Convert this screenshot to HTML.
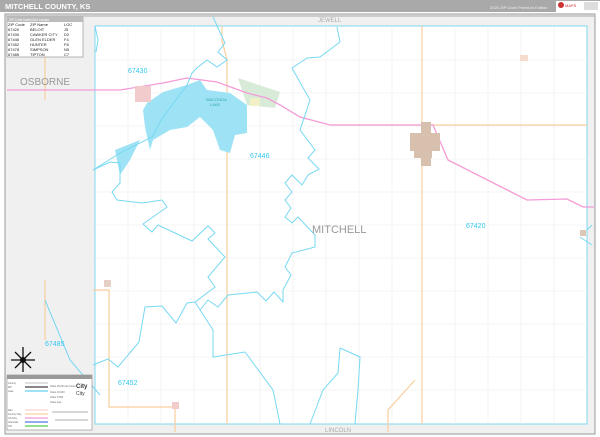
<!DOCTYPE html>
<html><head><meta charset="utf-8"><style>
*{margin:0;padding:0;box-sizing:border-box}
body{width:600px;height:437px;overflow:hidden;background:#fff;font-family:"Liberation Sans",sans-serif;position:relative}
</style></head><body>
<svg width="600" height="437" viewBox="0 0 600 437" xmlns="http://www.w3.org/2000/svg" style="position:absolute;left:0;top:0" font-family="Liberation Sans, sans-serif">
<rect x="0" y="0" width="600" height="437" fill="#fff"/>
<rect x="0" y="0" width="600" height="12" fill="#a9a9a9"/>
<text x="5" y="9" font-size="7.5" font-weight="bold" fill="#fff">MITCHELL COUNTY, KS</text>
<text x="490" y="9" font-size="4" fill="#eee">2020 ZIP Code Premium Edition</text>
<rect x="556" y="1" width="44" height="11" fill="#fff"/>
<circle cx="561" cy="5" r="3" fill="#c33"/><text x="565" y="7" font-size="4" fill="#c33">MAPS</text>
<rect x="584" y="2" width="14" height="8" fill="#ddd"/>
<!-- frame -->
<rect x="5" y="14" width="590" height="420" fill="#f0f0f0" stroke="#999" stroke-width="1"/>
<rect x="6" y="15" width="588" height="2" fill="#ccc"/>
<rect x="95" y="26" width="492" height="398" fill="#fff" stroke="#7fd8ef" stroke-width="1"/>
<!-- grid roads -->
<g stroke="#ececec" stroke-width="0.6" fill="none">
<path d="M95 60H587M95 93H587M95 126H587M95 159H587M95 192H587M95 225H587M95 258H587M95 291H587M95 324H587M95 357H587M95 390H587"/>
<path d="M128 26V424M161 26V424M194 26V424M260 26V424M293 26V424M326 26V424M359 26V424M392 26V424M455 26V424M488 26V424M521 26V424M554 26V424"/>
</g>
<!-- orange roads -->
<g stroke="#f9cf9e" stroke-width="1.2" fill="none">
<path d="M222 26V40L227 60V424"/>
<path d="M422 26V424"/>
<path d="M330 125H587"/>
<path d="M93 290H109V407H175V432"/>
<path d="M415 380L388 410V432"/>
<path d="M45 52V100M45 280V340"/>
</g>
<!-- lake -->
<path d="M238 78L280 92L275 108L247 105Z" fill="#d8ead8"/>
<path d="M147 103L163 92L187 85L200 80L207 90L230 93L247 105L247 133L235 135L230 153L220 150L213 130L200 117L187 127L170 130L153 140L150 150L145 127L143 110Z" fill="#9ee2f5"/>
<path d="M115 150L140 140L130 160L120 175Z" fill="#9ee2f5"/>
<!-- pink highway -->
<path d="M7 90H120L163 83L187 78L217 82L247 93L267 98L280 105L300 117L330 125H433L448 160L527 200L567 199L583 207H594" stroke="#f49bd7" stroke-width="1.3" fill="none"/>
<!-- towns -->
<g fill="#d8c0ae">
<rect x="421" y="122" width="10" height="44"/>
<rect x="410" y="133" width="30" height="18"/>
<rect x="414" y="150" width="18" height="8"/>
</g>
<rect x="135" y="86" width="16" height="16" fill="#f2cccc"/>
<rect x="250" y="98" width="10" height="8" fill="#f2f0c6"/>
<rect x="520" y="55" width="8" height="6" fill="#f5dccc"/>
<rect x="104" y="280" width="7" height="7" fill="#e6d0c6"/>
<rect x="172" y="402" width="7" height="7" fill="#f2cccc"/>
<rect x="580" y="230" width="6" height="6" fill="#dcc6b6"/>
<!-- zip boundaries -->
<g stroke="#78d8f2" stroke-width="1" fill="none">
<path d="M213 17L225 43L218 52L227 60L217 67L207 60L197 68L192 73L187 85L163 117L152 137L120 153L93 170"/>
<path d="M93 170L110 162L120 163L120 183L112 192L117 200L142 203L162 200L167 207L143 224L152 232L158 225L192 241L208 226L215 233L208 239L225 257L208 277L215 287L195 302L187 303L176 323L162 306L145 307L139 342L118 367L108 359L93 365"/>
<path d="M195 302L213 330L213 357L245 352L273 390L280 424"/>
<path d="M200 310L208 300L218 307L228 295L257 292L266 301L274 292L283 302L283 290L291 275L285 267L292 253L315 247L315 235L298 217L292 223L285 217L291 208L285 200L292 192L285 183L292 175L302 185L308 175L319 169L308 158L315 150L300 130L310 100L292 68L307 58L320 57L340 42L337 27"/>
<path d="M340 348L360 357L358 390L355 424M340 348L338 373L323 390L310 424"/>
<path d="M95 26L98 40L96 52"/>
<path d="M45 300L70 360L100 395"/>
<path d="M587 230L592 225M580 237L592 245"/>
</g>
<!-- labels -->
<g fill="#35c7ef" font-size="7">
<text x="128" y="73">67430</text>
<text x="250" y="158">67446</text>
<text x="466" y="228">67420</text>
<text x="45" y="346">67485</text>
<text x="118" y="385">67452</text>
</g>
<text x="206" y="101" font-size="4" fill="#3aa">WACONDA</text>
<text x="210" y="106" font-size="4" fill="#3aa">LAKE</text>
<text x="312" y="233" font-size="11" fill="#999">MITCHELL</text>
<text x="20" y="85" font-size="10" fill="#999">OSBORNE</text>
<text x="318" y="22" font-size="6" fill="#aaa">JEWELL</text>
<text x="325" y="432" font-size="6" fill="#aaa">LINCOLN</text>
<!-- zip index -->
<rect x="7" y="17" width="76" height="40" fill="#fff" stroke="#888" stroke-width="0.6"/>
<rect x="7" y="17" width="76" height="5" fill="#bbb"/>
<text x="9" y="21" font-size="3.2" fill="#fff">ZIP Code Index/Grid Locator</text>
<g font-size="4" fill="#222">
<text x="8" y="26">ZIP Code</text><text x="30" y="26">ZIP Name</text><text x="64" y="26">LOC</text>
<text x="8" y="31">67420</text><text x="30" y="31">BELOIT</text><text x="64" y="31">J5</text>
<text x="8" y="36">67430</text><text x="30" y="36">CAWKER CITY</text><text x="64" y="36">D2</text>
<text x="8" y="41">67446</text><text x="30" y="41">GLEN ELDER</text><text x="64" y="41">F4</text>
<text x="8" y="46">67452</text><text x="30" y="46">HUNTER</text><text x="64" y="46">F8</text>
<text x="8" y="51">67478</text><text x="30" y="51">SIMPSON</text><text x="64" y="51">N5</text>
<text x="8" y="56">67485</text><text x="30" y="56">TIPTON</text><text x="64" y="56">C7</text>
</g>
<!-- compass -->
<g stroke="#111" stroke-width="1.3"><path d="M23 347V372M11 360H35M15 352L31 368M31 352L15 368"/></g>
<circle cx="23" cy="360" r="3" fill="#111"/>
<!-- legend -->
<rect x="7" y="375" width="85" height="55" fill="#fff" stroke="#888" stroke-width="0.6"/>
<rect x="7" y="375" width="85" height="4" fill="#999"/>
<g stroke-width="1.3">
<path d="M25 383H48" stroke="#ccc"/><path d="M25 387H48" stroke="#888" stroke-width="2"/>
<path d="M25 391H48" stroke="#9ee2f5" stroke-width="2"/>
<path d="M25 410H48" stroke="#f6d4d8"/><path d="M25 414H48" stroke="#f9cf9e"/>
<path d="M25 418H48" stroke="#f49bd7"/><path d="M25 422H48" stroke="#5577dd"/><path d="M25 426H48" stroke="#55cc55"/>
</g>
<g font-size="2.5" fill="#666">
<text x="8" y="384">County</text><text x="8" y="388">ZIP</text><text x="8" y="392">Lake</text><text x="8" y="411">Rail</text><text x="8" y="415">County Hwy</text><text x="8" y="419">US Hwy</text><text x="8" y="423">Interstate</text><text x="8" y="427">Toll</text>
<text x="50" y="387">Cities 25,000 and more</text><text x="50" y="393">Cities 10,000</text><text x="50" y="398">Cities 5,000</text><text x="50" y="403">Cities less</text>
</g>
<text x="76" y="388" font-size="6" font-weight="bold" fill="#333">City</text>
<text x="76" y="395" font-size="5" fill="#333">City</text>
<path d="M52 412H88M55 420H88" stroke="#666" stroke-width="0.6"/>
</svg>
</body></html>
